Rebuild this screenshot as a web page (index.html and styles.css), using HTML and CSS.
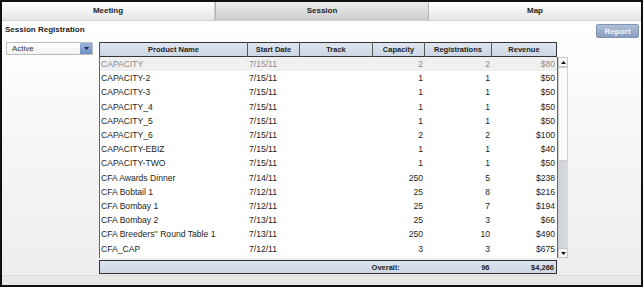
FILE: index.html
```html
<!DOCTYPE html>
<html lang="en">
<head>
    <meta charset="UTF-8">
    <title>Session Registration</title>
    <link rel="stylesheet" href="styles.css">
</head>
<body>
<div class="frame">
    <div class="tabs">
        <div class="tab">Meeting</div>
        <div class="tab active">Session</div>
        <div class="tab">Map</div>
    </div>

    <div class="panel">
        <div class="toolbar">
            <h1 class="title">Session Registration</h1>
            <button class="report">Report</button>
        </div>

        <div class="content">
            <div class="select">
                <span class="select-value">Active</span>
                <span class="select-arrow">
                    <svg width="5" height="3" viewBox="0 0 5 3"><path d="M0 0h5L2.5 3z" fill="#1b2a44"/></svg>
                </span>
            </div>

            <div class="grid">
                <table class="grid-head">
                    <colgroup>
                        <col class="c-name"><col class="c-date"><col class="c-track">
                        <col class="c-cap"><col class="c-reg"><col class="c-rev">
                    </colgroup>
                    <tr>
                        <th>Product Name</th>
                        <th>Start Date</th>
                        <th>Track</th>
                        <th>Capacity</th>
                        <th>Registrations</th>
                        <th>Revenue</th>
                    </tr>
                </table>

                <div class="grid-body">
                    <table class="rows">
                        <colgroup>
                            <col class="c-name"><col class="c-date"><col class="c-track">
                            <col class="c-cap"><col class="c-reg"><col class="c-rev">
                        </colgroup>
                        <tr class="disabled"><td>CAPACITY</td><td>7/15/11</td><td></td><td class="num">2</td><td class="num">2</td><td class="num">$80</td></tr>
                        <tr><td>CAPACITY-2</td><td>7/15/11</td><td></td><td class="num">1</td><td class="num">1</td><td class="num">$50</td></tr>
                        <tr><td>CAPACITY-3</td><td>7/15/11</td><td></td><td class="num">1</td><td class="num">1</td><td class="num">$50</td></tr>
                        <tr><td>CAPACITY_4</td><td>7/15/11</td><td></td><td class="num">1</td><td class="num">1</td><td class="num">$50</td></tr>
                        <tr><td>CAPACITY_5</td><td>7/15/11</td><td></td><td class="num">1</td><td class="num">1</td><td class="num">$50</td></tr>
                        <tr><td>CAPACITY_6</td><td>7/15/11</td><td></td><td class="num">2</td><td class="num">2</td><td class="num">$100</td></tr>
                        <tr><td>CAPACITY-EBIZ</td><td>7/15/11</td><td></td><td class="num">1</td><td class="num">1</td><td class="num">$40</td></tr>
                        <tr><td>CAPACITY-TWO</td><td>7/15/11</td><td></td><td class="num">1</td><td class="num">1</td><td class="num">$50</td></tr>
                        <tr><td>CFA Awards Dinner</td><td>7/14/11</td><td></td><td class="num">250</td><td class="num">5</td><td class="num">$238</td></tr>
                        <tr><td>CFA Bobtail 1</td><td>7/12/11</td><td></td><td class="num">25</td><td class="num">8</td><td class="num">$216</td></tr>
                        <tr><td>CFA Bombay 1</td><td>7/12/11</td><td></td><td class="num">25</td><td class="num">7</td><td class="num">$194</td></tr>
                        <tr><td>CFA Bombay 2</td><td>7/13/11</td><td></td><td class="num">25</td><td class="num">3</td><td class="num">$66</td></tr>
                        <tr><td>CFA Breeders'' Round Table 1</td><td>7/13/11</td><td></td><td class="num">250</td><td class="num">10</td><td class="num">$490</td></tr>
                        <tr><td>CFA_CAP</td><td>7/12/11</td><td></td><td class="num">3</td><td class="num">3</td><td class="num">$675</td></tr>
                    </table>

                    <div class="scrollbar">
                        <div class="scroll-btn">
                            <svg width="5" height="3" viewBox="0 0 5 3"><path d="M0 3h5L2.5 0z" fill="#111"/></svg>
                        </div>
                        <div class="scroll-thumb"></div>
                        <div class="scroll-track"></div>
                        <div class="scroll-btn">
                            <svg width="5" height="3" viewBox="0 0 5 3"><path d="M0 0h5L2.5 3z" fill="#111"/></svg>
                        </div>
                    </div>
                </div>

                <table class="grid-foot">
                    <colgroup>
                        <col class="c-name"><col class="c-date"><col class="c-track">
                        <col class="c-cap"><col class="c-reg"><col class="c-rev">
                    </colgroup>
                    <tr>
                        <td colspan="4" class="overall">Overall:</td>
                        <td class="num">96</td>
                        <td class="num">$4,266</td>
                    </tr>
                </table>
            </div>
        </div>

        <div class="status"></div>
    </div>
</div>
</body>
</html>
```

FILE: styles.css
```css
body {
    margin: 0;
    padding: 0;
    font-family: 'Liberation Sans', Arial, sans-serif;
    background-color: #fff;
}

.frame {
    width: 643px;
    height: 287px;
    box-sizing: border-box;
    border: 2px solid #111;
    display: flex;
    flex-direction: column;
}

/* tab strip */
.tabs {
    display: flex;
    height: 19px;
    flex: 0 0 19px;
}
.tab {
    flex: 1;
    text-align: center;
    line-height: 18px;
    font-size: 8px;
    font-weight: bold;
    color: #222;
    background: linear-gradient(to bottom, #ffffff, #e6e6e6);
    border-right: 1px solid #c9c9c9;
    border-bottom: 1px solid #d4d4d4;
}
.tab:last-child {
    border-right: none;
}
.tab.active {
    background: linear-gradient(to bottom, #ececec, #cdcdcd);
    border-left: 1px solid #b5b5b5;
    border-right: 1px solid #b5b5b5;
}

/* main panel */
.panel {
    flex: 1;
    display: flex;
    flex-direction: column;
    padding: 0 2px 0 4px;
    background: linear-gradient(to bottom, #ffffff 0%, #f7f7f8 40%, #ededee 100%);
}
.toolbar {
    display: flex;
    justify-content: space-between;
    align-items: flex-start;
    margin-top: 3px;
    height: 14px;
}
.title {
    margin: 1px 0 0 -1px;
    font-size: 8px;
    line-height: 10px;
    font-weight: bold;
    color: #222;
}
.report {
    width: 43px;
    height: 14px;
    padding: 0;
    font-family: 'Liberation Sans', Arial, sans-serif;
    font-size: 8px;
    font-weight: bold;
    color: #f2f5fa;
    background: linear-gradient(to bottom, #b0bfd7, #8a9ebf);
    border: 1px solid #8194b4;
    border-radius: 2px;
}

.content {
    display: flex;
    margin-top: 4px;
}

.select {
    width: 87px;
    height: 13px;
    box-sizing: border-box;
    display: flex;
    justify-content: space-between;
    border: 1px solid #bdbdbd;
    border-radius: 1px;
    background: linear-gradient(to bottom, #ffffff, #f1f1f1);
    margin-right: 6px;
}
.select-value {
    font-size: 8px;
    line-height: 11px;
    padding-left: 5px;
    color: #333;
}
.select-arrow {
    width: 12px;
    display: flex;
    align-items: center;
    justify-content: center;
    background: linear-gradient(to bottom, #9db4dc, #6f8fc6);
}

/* data grid */
.grid {
    width: 469px;
}
.c-name { width: 148px; }
.c-date { width: 52px; }
.c-track { width: 73px; }
.c-cap { width: 52px; }
.c-reg { width: 67px; }
.c-rev { width: 65px; }

table {
    border-collapse: collapse;
    table-layout: fixed;
    width: 457px;
}

.grid-head {
    height: 15px;
    background: linear-gradient(to bottom, #dde5ef, #cbd6e4);
    border: 1px solid #333;
}
.grid-head th {
    font-size: 7.5px;
    font-weight: bold;
    color: #222;
    padding: 0;
    border-left: 1px solid #555;
    height: 13px;
}

.grid-body {
    display: flex;
    height: 201px;
    border-left: 1px solid #666;
    background-color: #fff;
    width: 468px;
}
.rows {
    width: 456px;
    align-self: flex-start;
}
.rows td {
    height: 14.2px;
    padding: 0 2px 0 1px;
    font-size: 8.6px;
    color: #1e1e22;
    white-space: nowrap;
    overflow: hidden;
}
.rows tr.disabled td {
    background-color: #f0f0f0;
    color: #8c8c8c;
}
.num {
    text-align: right;
}

.scrollbar {
    width: 12px;
    display: flex;
    flex-direction: column;
    border-left: 1px solid #666;
    box-sizing: border-box;
}
.scroll-btn {
    height: 10px;
    flex: 0 0 10px;
    display: flex;
    align-items: center;
    justify-content: center;
    background: #f8f8f8;
    border: 1px solid #c6c6c6;
    box-sizing: border-box;
}
.scroll-thumb {
    height: 94px;
    flex: 0 0 94px;
    background: #fbfbfb;
    border: 1px solid #cfcfcf;
    box-sizing: border-box;
}
.scroll-track {
    flex: 1;
    background: linear-gradient(to right, #cdd1d7, #d9dce0);
}

.grid-foot {
    margin-top: 2px;
    height: 14px;
    background: linear-gradient(to bottom, #dbe3ee, #cdd7e5);
    border: 1px solid #333;
}
.grid-foot td {
    padding: 0 2px 0 0;
    font-size: 7.5px;
    font-weight: bold;
    color: #222;
}
.grid-foot .overall {
    text-align: right;
    padding-right: 25px;
}

.status {
    margin: auto -2px 0 -4px;
    height: 9px;
    background-color: #e8e8e8;
    border-top: 1px solid #dcdcdc;
}
```
